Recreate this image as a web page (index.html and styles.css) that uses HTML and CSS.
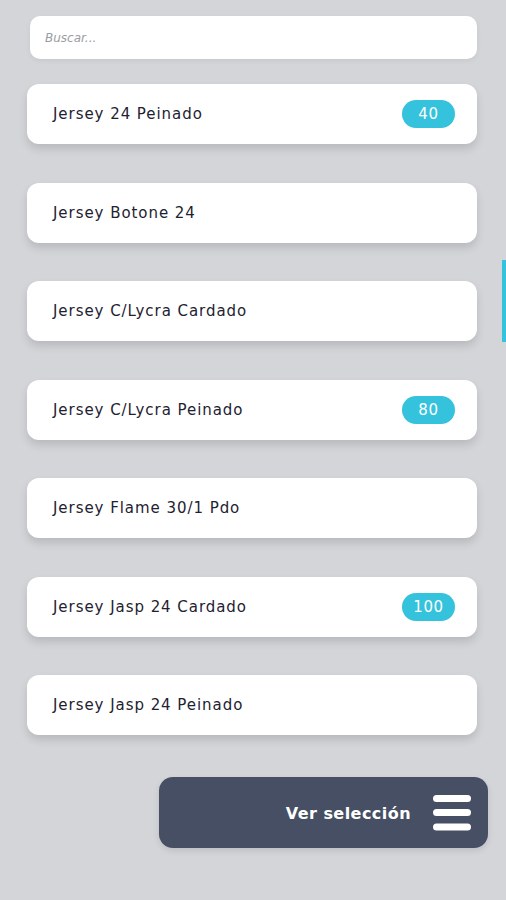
FILE: index.html
```html
<!DOCTYPE html>
<html lang="es">
<head>
<meta charset="utf-8">
<title>Selección</title>
<link rel="stylesheet" href="styles.css">
</head>
<body>
<div class="screen">
  <div class="search">
    <input class="search-input" type="text" placeholder="Buscar...">
  </div>
  <ul class="list">
    <li class="card"><span class="name">Jersey 24 Peinado</span><span class="badge">40</span></li>
    <li class="card"><span class="name">Jersey Botone 24</span></li>
    <li class="card"><span class="name">Jersey C/Lycra Cardado</span></li>
    <li class="card"><span class="name">Jersey C/Lycra Peinado</span><span class="badge">80</span></li>
    <li class="card"><span class="name">Jersey Flame 30/1 Pdo</span></li>
    <li class="card"><span class="name">Jersey Jasp 24 Cardado</span><span class="badge">100</span></li>
    <li class="card"><span class="name">Jersey Jasp 24 Peinado</span></li>
  </ul>
  <div class="scrollbar"></div>
  <div class="footer">
    <button class="view-btn" type="button">
      <span class="view-label">Ver selección</span>
      <svg class="menu-icon" width="38" height="36" viewBox="0 0 38 36" aria-hidden="true">
        <line x1="3.5" y1="3.5" x2="34.5" y2="3.5" />
        <line x1="3.5" y1="17.5" x2="34.5" y2="17.5" />
        <line x1="3.5" y1="32" x2="34.5" y2="32" />
      </svg>
    </button>
  </div>
</div>
</body>
</html>
```

FILE: styles.css
```css
* { box-sizing: border-box; }
html, body {
  margin: 0;
  padding: 0;
  background: #d3d5d9;
  font-family: "DejaVu Sans", "Noto Sans", sans-serif;
}
.screen {
  position: relative;
  width: 506px;
  height: 900px;
  overflow: hidden;
  display: flex;
  flex-direction: column;
}
.search {
  padding: 16px 29px 0 30px;
}
.search-input {
  display: block;
  width: 100%;
  height: 43px;
  border: none;
  outline: none;
  border-radius: 10px;
  background: #ffffff;
  padding: 0 15px;
  font-family: inherit;
  font-size: 12px;
  font-style: italic;
  color: #333;
  box-shadow: 0 2px 5px rgba(0,0,0,0.06);
}
.search-input::placeholder {
  color: #9a9ca3;
  font-style: italic;
}
.list {
  list-style: none;
  margin: 25px 0 0 0;
  padding: 0 29px 0 27px;
  display: flex;
  flex-direction: column;
  gap: 38.5px;
}
.card {
  height: 60px;
  background: #ffffff;
  border-radius: 12px;
  display: flex;
  align-items: center;
  justify-content: space-between;
  padding: 0 22px 0 26px;
  box-shadow: 0 5px 9px rgba(0,0,0,0.13);
}
.name {
  font-size: 15px;
  color: #1e2230;
  letter-spacing: 0.95px;
}
.badge {
  min-width: 53px;
  height: 28px;
  padding: 0 10px;
  border-radius: 14px;
  background: #34c2dc;
  color: #ffffff;
  font-size: 15px;
  letter-spacing: 0.6px;
  display: flex;
  align-items: center;
  justify-content: center;
}
.scrollbar {
  position: absolute;
  right: 0;
  top: 260px;
  width: 4px;
  height: 82px;
  background: #34c2dc;
}
.footer {
  display: flex;
  justify-content: flex-end;
  padding: 42px 18px 0 0;
}
.view-btn {
  width: 329px;
  height: 71px;
  border: none;
  border-radius: 14px;
  background: #464f63;
  display: flex;
  align-items: center;
  justify-content: flex-end;
  gap: 22px;
  padding: 0 17px 0 0;
  box-shadow: 0 3px 6px rgba(0,0,0,0.1);
  font-family: inherit;
}
.view-label {
  color: #ffffff;
  font-size: 16px;
  font-weight: 700;
  letter-spacing: 0.45px;
  padding-top: 2px;
}
.menu-icon line {
  stroke: #ffffff;
  stroke-width: 7;
  stroke-linecap: round;
}
```
